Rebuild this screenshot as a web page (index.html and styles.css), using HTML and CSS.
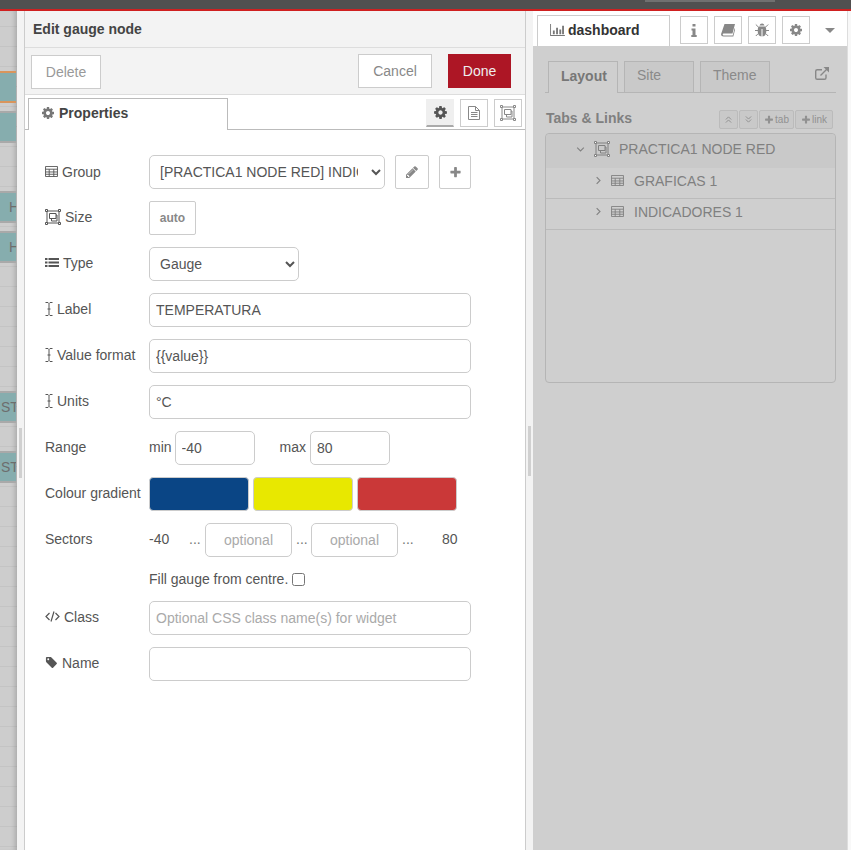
FILE: index.html
```html
<!DOCTYPE html>
<html>
<head>
  <meta charset="utf-8">
  <title>Edit gauge node</title>
  <link rel="stylesheet" href="styles.css">
</head>
<body>
  <svg class="sprite" xmlns="http://www.w3.org/2000/svg">
    <symbol id="i-cog" viewBox="0 0 1792 1792"><path fill="currentColor" d="M1152 896q0-106-75-181t-181-75-181 75-75 181 75 181 181 75 181-75 75-181zm512-109v222q0 12-8 23t-20 13l-185 28q-19 54-39 91 35 50 107 138 10 12 10 25t-9 23q-27 37-99 108t-94 71q-12 0-26-9l-138-108q-44 23-91 38-16 136-29 186-7 28-36 28h-222q-14 0-24.500-8.500t-11.500-21.500l-28-184q-49-16-90-37l-141 107q-10 9-25 9-14 0-25-11-126-114-165-168-7-10-7-23 0-12 8-23 15-21 51-66.500t54-70.500q-27-50-41-99l-183-27q-13-2-21-12.500t-8-23.500v-222q0-12 8-23t19-13l186-28q14-46 39-92-40-57-107-138-10-12-10-24 0-10 9-23 26-36 98.500-107.500t94.500-71.500q13 0 26 10l138 107q44-23 91-38 16-136 29-186 7-28 36-28h222q14 0 24.500 8.500t11.500 21.500l28 184q49 16 90 37l142-107q9-9 24-9 13 0 25 10 129 119 165 170 7 8 7 22 0 12-8 23-15 21-51 66.500t-54 70.500q26 50 41 98l183 28q13 2 21 12.500t8 23.500z"/></symbol>
    <symbol id="i-plus" viewBox="0 0 1792 1792"><path fill="currentColor" d="M1600 736v192q0 40-28 68t-68 28h-416v416q0 40-28 68t-68 28h-192q-40 0-68-28t-28-68v-416h-416q-40 0-68-28t-28-68v-192q0-40 28-68t68-28h416v-416q0-40 28-68t68-28h192q40 0 68 28t28 68v416h416q40 0 68 28t28 68z"/></symbol>
    <symbol id="i-pencil" viewBox="0 0 1792 1792"><path fill="currentColor" d="M491 1536l91-91-235-235-91 91v107h128v128h107zm523-928q0-22-22-22-10 0-17 7l-542 542q-7 7-7 17 0 22 22 22 10 0 17-7l542-542q7-7 7-17zm-54-192l416 416-832 832h-416v-416zm683 96q0 53-37 90l-166 166-416-416 166-165q36-38 90-38 53 0 91 38l235 234q37 39 37 91z"/></symbol>
    <symbol id="i-tag" viewBox="0 0 1792 1792"><path fill="currentColor" d="M576 448q0-53-37.500-90.500t-90.500-37.500-90.500 37.500-37.500 90.500 37.500 90.500 90.500 37.500 90.500-37.500 37.500-90.500zm1067 576q0 53-37 90l-491 492q-39 37-91 37-53 0-90-37l-715-716q-38-37-64.500-101t-26.500-117v-416q0-52 38-90t90-38h416q53 0 117 26.500t102 64.500l715 714q37 39 37 91z"/></symbol>
    <symbol id="i-table" viewBox="0 0 14 12"><path fill="none" stroke="currentColor" d="M.5.500h13v11H.5zM.5 3.500h13M.5 6.500h13M.5 9h13M4.500 3.500V11.500M9.500 3.500V11.500"/></symbol>
    <symbol id="i-list" viewBox="0 0 14 12"><path fill="currentColor" d="M0 1h2.500v2H0zM3.500 1H14v2H3.500zM0 4.500h2.500v2H0zM3.500 4.500H14v2H3.500zM0 8h2.500v2H0zM3.500 8H14v2H3.500z"/></symbol>
    <symbol id="i-cursor" viewBox="0 0 8 14"><path fill="none" stroke="currentColor" d="M.5.500h2.500l1 1 1-1h2.500M4 1.500v11M.5 13.500h2.500l1-1 1 1h2.500M2.500 7h3"/></symbol>
    <symbol id="i-code" viewBox="0 0 15 11"><path fill="none" stroke="currentColor" stroke-width="1.200" d="M4.500 2 1 5.500 4.500 9M10.500 2 14 5.500 10.500 9M9 .5 6 10.500"/></symbol>
    <symbol id="i-size" viewBox="0 0 16 16"><path fill="none" stroke="currentColor" d="M2 2h12v12H2zM4.500 4.500h6.500v5H4.500zM6.500 9.500v2.500h5.500v-6H11"/><path fill="#fff" stroke="currentColor" d="M.5.500h2v2h-2zM13.500.500h2v2h-2zM.5 13.500h2v2h-2zM13.500 13.500h2v2h-2z"/></symbol>
    <symbol id="i-file" viewBox="0 0 12 14"><path fill="none" stroke="currentColor" d="M.5.500h7l4 4v9H.5zM7.500.500v4h4M3 6.500h6.500M3 8.500h6.500M3 10.500h6.500"/></symbol>
    <symbol id="i-bars" viewBox="0 0 16 13"><path fill="currentColor" d="M0 0h1v12h15v1H0zM3 7h2v4H3zM6.500 4h2v7h-2zM10 6h2v5h-2zM13 2h2v9h-2z"/></symbol>
    <symbol id="i-info" viewBox="0 0 6 13"><path fill="currentColor" d="M1.500 0h3v2.500h-3zM.5 4.500h4v6.500h1.200v2H.3v-2h1.200V6.500h-1z"/></symbol>
    <symbol id="i-book" viewBox="0 0 14 13"><path fill="currentColor" d="M3.500 0H14l-2.500 9.500H2.700q-1 0-1 1t1 1h9l2-7.500.6.800-2 7.700H2.500Q0 12.500 0 10.200z"/></symbol>
    <symbol id="i-bug" viewBox="0 0 14 14"><path fill="currentColor" d="M4.500 2.500Q5 .5 7 .5t2.500 2zM3.500 3.500h7q.8 1.500.8 4.500 0 5-3.800 5.500V6h-1v7.500Q2.700 13 2.700 8q0-3 .8-4.500z"/><path fill="none" stroke="currentColor" d="M.8 1.500l2.700 2.700M13.200 1.500l-2.700 2.700M0 7.500h3M11 7.500h3M.8 13l2.500-2.500M13.200 13l-2.500-2.500"/></symbol>
    <symbol id="i-link" viewBox="0 0 14 13"><path fill="none" stroke="currentColor" stroke-width="1.400" d="M11 7.500v3.200q0 1.600-1.600 1.600H2.300q-1.600 0-1.600-1.600V4.300q0-1.600 1.600-1.600H7M5.500 8.500 13 1"/><path fill="currentColor" d="M8.500 0H14v5.500z"/></symbol>
    <symbol id="i-up" viewBox="0 0 8 8"><path fill="none" stroke="currentColor" stroke-width="1.100" d="M1 4 4 1l3 3M1 7.500l3-3 3 3"/></symbol>
    <symbol id="i-down" viewBox="0 0 8 8"><path fill="none" stroke="currentColor" stroke-width="1.100" d="M1 .5l3 3 3-3M1 4l3 3 3-3"/></symbol>
    <symbol id="i-open" viewBox="0 0 10 6"><path fill="none" stroke="currentColor" stroke-width="1.300" d="M1 .8l4 4 4-4"/></symbol>
    <symbol id="i-closed" viewBox="0 0 6 10"><path fill="none" stroke="currentColor" stroke-width="1.300" d="M.8 1l4 4-4 4"/></symbol>
  </svg>

  <div class="topbar"><div class="topbar-tab"></div></div>

  <div class="main">
    <div class="canvas">
      <div class="node node-1 node-selected"></div>
      <div class="node node-2"></div>
      <div class="node node-3"><span class="node-h">H</span></div>
      <div class="node node-4"><span class="node-h">H</span></div>
      <div class="node node-5"><span class="node-st">ST</span></div>
      <div class="node node-6"><span class="node-st">ST</span></div>
    </div>
    <div class="sep"><div class="sep-handle sep-handle-left"></div></div>

    <div class="tray">
      <div class="tray-title">Edit gauge node</div>
      <div class="tray-actions">
        <button class="btn btn-delete">Delete</button>
        <div class="tray-actions-right">
          <button class="btn">Cancel</button>
          <button class="btn btn-done">Done</button>
        </div>
      </div>
      <div class="tray-tabs">
        <div class="tray-tab"><svg class="ico-cog"><use href="#i-cog"/></svg>Properties</div>
        <div class="tray-tab-icons">
          <div class="tab-icon tab-icon-on"><svg class="ico-cog-big"><use href="#i-cog"/></svg></div>
          <div class="tab-icon"><svg class="ico-file"><use href="#i-file"/></svg></div>
          <div class="tab-icon"><svg class="ico-size-big"><use href="#i-size"/></svg></div>
        </div>
      </div>

      <div class="form">
        <div class="row">
          <div class="lbl lbl-group"><svg class="ico-table"><use href="#i-table"/></svg>Group</div>
          <select class="field sel-group"><option>[PRACTICA1 NODE RED] INDICADORES 1</option></select>
          <button class="btn-icon btn-edit"><svg class="ico-pencil"><use href="#i-pencil"/></svg></button>
          <button class="btn-icon btn-add"><svg class="ico-plus"><use href="#i-plus"/></svg></button>
        </div>
        <div class="row">
          <div class="lbl"><svg class="ico-size"><use href="#i-size"/></svg>Size</div>
          <button class="btn-auto">auto</button>
        </div>
        <div class="row">
          <div class="lbl"><svg class="ico-list"><use href="#i-list"/></svg>Type</div>
          <select class="field sel-type"><option>Gauge</option></select>
        </div>
        <div class="row">
          <div class="lbl"><svg class="ico-cursor"><use href="#i-cursor"/></svg>Label</div>
          <input class="field wide" type="text" value="TEMPERATURA">
        </div>
        <div class="row">
          <div class="lbl"><svg class="ico-cursor"><use href="#i-cursor"/></svg>Value format</div>
          <input class="field wide" type="text" value="{{value}}">
        </div>
        <div class="row">
          <div class="lbl"><svg class="ico-cursor"><use href="#i-cursor"/></svg>Units</div>
          <input class="field wide" type="text" value="°C">
        </div>
        <div class="row">
          <div class="lbl">Range</div>
          <span class="range-min">min</span>
          <input class="field range" type="text" value="-40">
          <span class="range-max">max</span>
          <input class="field range" type="text" value="80">
        </div>
        <div class="row">
          <div class="lbl">Colour gradient</div>
          <div class="swatches">
            <div class="swatch swatch-blue"></div>
            <div class="swatch swatch-yellow"></div>
            <div class="swatch swatch-red"></div>
          </div>
        </div>
        <div class="row">
          <div class="lbl">Sectors</div>
          <span class="sector-min">-40</span>
          <span class="dots dots-1">...</span>
          <input class="field sector" type="text" placeholder="optional">
          <span class="dots dots-2">...</span>
          <input class="field sector" type="text" placeholder="optional">
          <span class="dots dots-3">...</span>
          <span class="sector-max">80</span>
        </div>
        <div class="row row-check">
          <label class="check">Fill gauge from centre. <input class="check-box" type="checkbox"></label>
        </div>
        <div class="row">
          <div class="lbl"><svg class="ico-code"><use href="#i-code"/></svg>Class</div>
          <input class="field wide" type="text" placeholder="Optional CSS class name(s) for widget">
        </div>
        <div class="row">
          <div class="lbl"><svg class="ico-tag"><use href="#i-tag"/></svg>Name</div>
          <input class="field wide" type="text">
        </div>
      </div>
    </div>

    <div class="sep sep-right"><div class="sep-handle sep-handle-right"></div></div>

    <div class="sidebar">
      <div class="side-tabs">
        <div class="side-tab"><svg class="ico-bars"><use href="#i-bars"/></svg>dashboard</div>
        <div class="side-tab-icons">
          <div class="tab-icon"><svg class="ico-info"><use href="#i-info"/></svg></div>
          <div class="tab-icon"><svg class="ico-book"><use href="#i-book"/></svg></div>
          <div class="tab-icon"><svg class="ico-bug"><use href="#i-bug"/></svg></div>
          <div class="tab-icon"><svg class="ico-cog-side"><use href="#i-cog"/></svg></div>
        </div>
        <div class="side-caret"></div>
      </div>
      <div class="side-body">
        <div class="subtabs">
          <div class="subtab subtab-on">Layout</div>
          <div class="subtab">Site</div>
          <div class="subtab">Theme</div>
          <svg class="ico-link"><use href="#i-link"/></svg>
        </div>
        <div class="links-head">
          <div class="links-title">Tabs &amp; Links</div>
          <div class="mini-btns">
            <div class="mini mini-arrow"><svg class="ico-arrow"><use href="#i-up"/></svg></div>
            <div class="mini mini-arrow"><svg class="ico-arrow"><use href="#i-down"/></svg></div>
            <div class="mini mini-tab"><svg class="ico-mini-plus"><use href="#i-plus"/></svg>tab</div>
            <div class="mini mini-link"><svg class="ico-mini-plus"><use href="#i-plus"/></svg>link</div>
          </div>
        </div>
        <div class="tree">
          <div class="tree-row tree-root">
            <svg class="ico-open"><use href="#i-open"/></svg>
            <svg class="ico-tree-size"><use href="#i-size"/></svg>
            PRACTICA1 NODE RED
          </div>
          <div class="tree-row tree-group">
            <svg class="ico-closed"><use href="#i-closed"/></svg>
            <svg class="ico-tree-table"><use href="#i-table"/></svg>
            GRAFICAS 1
          </div>
          <div class="tree-row tree-group">
            <svg class="ico-closed"><use href="#i-closed"/></svg>
            <svg class="ico-tree-table"><use href="#i-table"/></svg>
            INDICADORES 1
          </div>
        </div>
      </div>
    </div>
    <div class="edge"></div>
  </div>
</body>
</html>
```

FILE: styles.css
```css
* {
  box-sizing: border-box;
}

html, body {
  margin: 0;
  padding: 0;
  height: 100%;
  overflow: hidden;
}

body {
  font-family: "Liberation Sans", Arial, sans-serif;
  font-size: 14px;
  color: #555;
  background: #fff;
}

.sprite {
  display: none;
}

svg {
  display: block;
  flex: none;
}

.topbar {
  height: 11px;
  background: #505050;
  border-bottom: 2px solid #cf2020;
  padding-left: 645px;
}

.topbar-tab {
  width: 130px;
  height: 2px;
  background: #707070;
}

.main {
  display: flex;
  height: 839px;
}

/* workspace behind the tray */
.canvas {
  position: relative;
  width: 17px;
  overflow: hidden;
  background-color: #cdcdcd;
  background-image: repeating-linear-gradient(to bottom, #c4c4c4 0, #c4c4c4 1px, transparent 1px, transparent 20px);
  background-position: 0 15px;
  box-shadow: inset -5px 0 5px -3px rgba(0, 0, 0, .18);
}

.node {
  position: absolute;
  left: 0;
  width: 16px;
  height: 32px;
  background: #86adae;
  border-top: 2px solid #a9a9a9;
  border-bottom: 2px solid #a9a9a9;
  color: #6d6d6d;
  overflow: hidden;
  line-height: 28px;
}

.node-selected {
  border-color: #d9955c;
}

.node-1 { top: 60px; }
.node-2 { top: 100px; }
.node-3 { top: 180px; }
.node-4 { top: 220px; }
.node-5 { top: 380px; }
.node-6 { top: 440px; }

.node-h {
  margin-left: 9px;
}

.node-st {
  margin-left: 1px;
}

.sep {
  width: 7px;
  background: #f3f3f3;
  padding-top: 417px;
  padding-left: 2px;
}

.sep-right {
  padding-top: 415px;
}

.sep-handle {
  width: 3px;
  height: 50px;
  background: #d0d0d0;
}

/* edit tray */
.tray {
  width: 502px;
  background: #fff;
  border-left: 1px solid #ccc;
  border-right: 1px solid #ccc;
}

.tray-title {
  height: 37px;
  padding: 0 8px;
  line-height: 36px;
  font-weight: bold;
  color: #444;
  background: #f3f3f3;
  border-bottom: 1px solid #ddd;
}

.tray-actions {
  display: flex;
  justify-content: space-between;
  height: 47px;
  padding: 6px 14px 0 6px;
  background: #f3f3f3;
  border-bottom: 1px solid #ddd;
}

.tray-actions-right {
  display: flex;
  gap: 16px;
}

.btn {
  width: 74px;
  height: 34px;
  padding: 0;
  font: 14px "Liberation Sans", Arial, sans-serif;
  color: #888;
  background: #fff;
  border: 1px solid #ccc;
}

.btn-delete {
  width: 70px;
  margin-top: 1px;
  color: #999;
}

.btn-done {
  width: 63px;
  color: #eee;
  background: #ad1625;
  border-color: #ad1625;
}

.tray-tabs {
  display: flex;
  justify-content: space-between;
  height: 35px;
  padding: 3px 3px 0 3px;
  border-bottom: 1px solid #bbb;
}

.tray-tab {
  display: flex;
  align-items: center;
  width: 200px;
  height: 32px;
  padding: 0 0 4px 12px;
  font-weight: bold;
  color: #444;
  background: #fff;
  border: 1px solid #bbb;
  border-bottom: 0;
}

.ico-cog {
  width: 14px;
  height: 14px;
  margin-right: 4px;
  color: #777;
}

.tray-tab-icons, .side-tab-icons {
  display: flex;
  gap: 6px;
}

.tray-tab-icons {
  padding-top: 1px;
}

.tab-icon {
  display: flex;
  align-items: center;
  justify-content: center;
  width: 28px;
  height: 28px;
  color: #888;
  background: #fff;
  border: 1px solid #ccc;
}

.tab-icon-on {
  color: #555;
  background: #efefef;
  border-color: #efefef;
  border-bottom: 2px solid #aaa;
}

.ico-cog-big {
  width: 15px;
  height: 15px;
}

.ico-file {
  width: 12px;
  height: 14px;
}

.ico-size-big {
  width: 16px;
  height: 16px;
}

/* form rows */
.form {
  padding: 25px 0 0 20px;
}

.row {
  display: flex;
  align-items: center;
  height: 34px;
  margin-bottom: 12px;
}

.lbl {
  display: flex;
  align-items: center;
  flex: none;
  width: 104px;
  padding-bottom: 3px;
}

.lbl-group {
  padding-bottom: 1px;
}

.field {
  height: 34px;
  font: 14px "Liberation Sans", Arial, sans-serif;
  color: #555;
  background: #fff;
  border: 1px solid #ccc;
  border-radius: 5px;
  outline: none;
}

input.field {
  padding: 0 6px;
}

input.field::placeholder {
  color: #aaa;
}

select.field {
  padding: 0 10px 0 6px;
}

.sel-group {
  width: 236px;
}

.sel-type {
  width: 150px;
}

.wide {
  width: 322px;
}

.btn-icon {
  display: flex;
  align-items: center;
  justify-content: center;
  height: 34px;
  padding: 0;
  color: #888;
  background: #fff;
  border: 1px solid #ccc;
  border-radius: 2px;
}

.btn-edit {
  width: 34px;
  margin-left: 10px;
}

.btn-add {
  width: 32px;
  margin-left: 10px;
}

.ico-pencil {
  width: 14px;
  height: 14px;
}

.ico-plus {
  width: 13px;
  height: 13px;
}

.btn-auto {
  width: 47px;
  height: 34px;
  padding: 0;
  font: bold 12px "Liberation Sans", Arial, sans-serif;
  color: #888;
  background: #fff;
  border: 1px solid #ccc;
  border-radius: 2px;
}

.ico-table {
  width: 13px;
  height: 11px;
  margin-right: 4px;
}

.ico-size {
  width: 16px;
  height: 16px;
  margin-right: 4px;
}

.ico-list {
  width: 14px;
  height: 12px;
  margin-right: 4px;
}

.ico-cursor {
  width: 8px;
  height: 14px;
  margin-right: 4px;
}

.ico-code {
  width: 15px;
  height: 11px;
  margin-right: 4px;
}

.ico-tag {
  width: 13px;
  height: 13px;
  margin-right: 4px;
}

.range {
  width: 80px;
}

.range-min, .range-max, .sector-min, .sector-max {
  padding-bottom: 3px;
}

.range-min {
  margin-right: 3px;
}

.range-max {
  margin: 0 4px 0 25px;
}

.swatches {
  display: flex;
  gap: 4px;
}

.swatch {
  width: 100px;
  height: 34px;
  border: 1px solid #ccc;
  border-radius: 4px;
}

.swatch-blue {
  background: #0a4585;
}

.swatch-yellow {
  background: #e8e800;
}

.swatch-red {
  background: #ca3838;
}

.sector {
  width: 87px;
  text-align: center;
}

.sector-min {
  width: 21px;
}

.dots {
  width: 12px;
  color: #777;
  padding-bottom: 3px;
}

.dots-1 {
  margin: 0 4px 0 19px;
}

.dots-2 {
  margin: 0 3px 0 4px;
}

.dots-3 {
  margin-left: 4px;
}

.sector-max {
  margin-left: 28px;
}

.row-check {
  height: 20px;
}

.check {
  display: flex;
  align-items: center;
  gap: 4px;
  margin-left: 104px;
}

.check-box {
  width: 13px;
  height: 13px;
  margin: 0;
}

/* dashboard sidebar, greyed out behind the tray */
.sidebar {
  width: 314px;
  display: flex;
  flex-direction: column;
  background: #cfcfcf;
}

.edge {
  width: 4px;
  background: #f8f8f8;
  border-left: 1px solid #ddd;
}

.side-tabs {
  display: flex;
  height: 35px;
  padding: 4px 0 0 4px;
  background: #fff;
}

.side-tab {
  display: flex;
  align-items: center;
  width: 133px;
  height: 31px;
  padding: 0 0 2px 12px;
  font-weight: bold;
  color: #333;
  background: #fff;
  border: 1px solid #ccc;
  border-bottom: 0;
}

.ico-bars {
  width: 15px;
  height: 12px;
  margin-right: 3px;
  color: #777;
}

.side-tab-icons {
  margin: 1px 0 0 10px;
}

.ico-info {
  width: 6px;
  height: 13px;
}

.ico-book {
  width: 14px;
  height: 13px;
}

.ico-bug {
  width: 14px;
  height: 14px;
}

.ico-cog-side {
  width: 14px;
  height: 14px;
}

.side-caret {
  width: 0;
  height: 0;
  margin: 13px 0 0 15px;
  border-left: 5px solid transparent;
  border-right: 5px solid transparent;
  border-top: 5px solid #888;
}

.side-body {
  padding: 15px 11px 0 12px;
}

.subtabs {
  display: flex;
  align-items: flex-end;
  gap: 6px;
  height: 32px;
  padding-left: 3px;
  border-bottom: 1px solid #b5b5b5;
}

.subtab {
  width: 70px;
  height: 31px;
  padding-left: 12px;
  line-height: 27px;
  color: #8a8a8a;
  background: #c9c9c9;
  border: 1px solid #b5b5b5;
  border-bottom: 0;
}

.subtab-on {
  font-weight: bold;
  color: #777;
  background: #cfcfcf;
  height: 32px;
  line-height: 29px;
  margin-bottom: -1px;
}

.ico-link {
  width: 14px;
  height: 13px;
  margin: 0 0 12px 39px;
  color: #888;
}

.links-head {
  display: flex;
  justify-content: space-between;
  align-items: center;
  height: 40px;
  padding: 13px 3px 0 1px;
}

.links-title {
  font-weight: bold;
  color: #808080;
  padding-bottom: 3px;
}

.mini-btns {
  display: flex;
  gap: 1px;
}

.mini {
  display: flex;
  align-items: center;
  justify-content: center;
  height: 19px;
  font-size: 10px;
  color: #919191;
  background: #c9c9c9;
  border: 1px solid #bbb;
  border-radius: 2px;
}

.mini-arrow {
  width: 19px;
}

.mini-tab {
  width: 35px;
}

.mini-link {
  width: 38px;
}

.ico-arrow {
  width: 7px;
  height: 7px;
}

.ico-mini-plus {
  width: 10px;
  height: 10px;
  margin-right: 1px;
}

.tree {
  height: 250px;
  border: 1px solid #b5b5b5;
  border-radius: 4px;
  color: #808080;
}

.tree-row {
  display: flex;
  align-items: center;
  padding-bottom: 5px;
  border-bottom: 1px solid #bbb;
}

.tree-root {
  height: 34px;
  padding-left: 30px;
  padding-bottom: 4px;
  background: #c9c9c9;
  border-bottom: 0;
  border-radius: 4px 4px 0 0;
}

.tree-group {
  height: 31px;
  padding-left: 50px;
}

.ico-open {
  width: 9px;
  height: 5px;
  margin-right: 9px;
}

.ico-closed {
  width: 5px;
  height: 9px;
  margin-right: 10px;
}

.ico-tree-size {
  width: 16px;
  height: 16px;
  margin-right: 9px;
}

.ico-tree-table {
  width: 13px;
  height: 11px;
  margin-right: 10px;
}
```
